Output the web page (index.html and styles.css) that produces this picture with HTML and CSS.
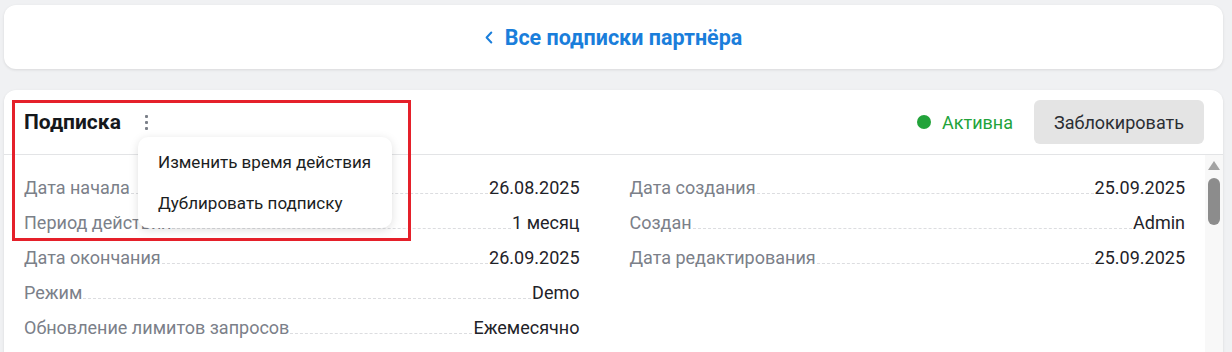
FILE: index.html
```html
<!DOCTYPE html>
<html lang="ru">
<head>
<meta charset="utf-8">
<title>Подписка</title>
<link rel="stylesheet" href="styles.css">
</head>
<body>
<div class="page">
  <div class="card nav-card">
    <a class="back-link" href="#">
      <svg class="chev" width="8" height="13" viewBox="0 0 8 13"><path d="M6.3 1.5 L1.6 6.5 L6.3 11.5" fill="none" stroke="currentColor" stroke-width="2" stroke-linecap="round" stroke-linejoin="round"/></svg>
      <span>Все подписки партнёра</span>
    </a>
  </div>

  <div class="card sub-card">
    <div class="sub-header">
      <div class="title-group">
        <h2 class="title">Подписка</h2>
        <button class="kebab" aria-label="Действия"><i></i><i></i><i></i></button>
      </div>
      <div class="actions">
        <span class="status"><span class="dot"></span>Активна</span>
        <button class="btn">Заблокировать</button>
      </div>
      <div class="menu">
        <div class="menu-item">Изменить время действия</div>
        <div class="menu-item">Дублировать подписку</div>
      </div>
    </div>
    <div class="sub-body">
      <div class="details">
        <div class="col">
          <div class="row"><span class="label">Дата начала</span><span class="leader"></span><span class="value">26.08.2025</span></div>
          <div class="row"><span class="label">Период действия</span><span class="leader"></span><span class="value">1 месяц</span></div>
          <div class="row"><span class="label">Дата окончания</span><span class="leader"></span><span class="value">26.09.2025</span></div>
          <div class="row"><span class="label">Режим</span><span class="leader"></span><span class="value">Demo</span></div>
          <div class="row"><span class="label">Обновление лимитов запросов</span><span class="leader"></span><span class="value">Ежемесячно</span></div>
        </div>
        <div class="col">
          <div class="row"><span class="label">Дата создания</span><span class="leader"></span><span class="value">25.09.2025</span></div>
          <div class="row"><span class="label">Создан</span><span class="leader"></span><span class="value">Admin</span></div>
          <div class="row"><span class="label">Дата редактирования</span><span class="leader"></span><span class="value">25.09.2025</span></div>
        </div>
      </div>
      <div class="scrollbar"><span class="sb-arrow"></span><span class="sb-thumb"></span></div>
    </div>
  </div>

  <div class="highlight"></div>
</div>
</body>
</html>
```

FILE: styles.css
```css
* { box-sizing: border-box; }
html, body { margin: 0; height: 100%; }
body {
  background: #f0f1f3;
  font-family: Roboto, "Noto Sans", "Liberation Sans", sans-serif;
  color: #1f2329;
  overflow: hidden;
}
.page {
  position: relative;
  padding: 5px 9px 0 4px;
  display: flex;
  flex-direction: column;
  gap: 21px;
}
.card {
  background: #fff;
  border-radius: 12px;
  box-shadow: 0 1px 3px rgba(0,0,0,0.10);
}
.nav-card {
  height: 64px;
  display: flex;
  align-items: center;
  justify-content: center;
}
.back-link {
  display: flex;
  align-items: center;
  gap: 12px;
  color: #1a7edb;
  text-decoration: none;
  font-weight: 700;
  font-size: 21.5px;
}
.chev { display: block; margin-top: 1px; }

.sub-card {
  height: 300px;
  display: flex;
  flex-direction: column;
}
.sub-header {
  position: relative;
  height: 65px;
  flex: none;
  display: flex;
  align-items: center;
  justify-content: space-between;
  padding: 0 19px 0 20px;
  border-bottom: 1px solid #e3e4e6;
}
.title-group { display: flex; align-items: center; }
.title {
  margin: 0;
  font-size: 21px;
  font-weight: 700;
  color: #15181c;
}
.kebab {
  margin-left: 14px;
  width: 24px;
  height: 24px;
  padding: 0;
  border: 0;
  background: none;
  display: flex;
  flex-direction: column;
  align-items: center;
  justify-content: center;
  gap: 3px;
}
.kebab i {
  display: block;
  width: 3px;
  height: 3px;
  border-radius: 1px;
  background: #7b8089;
}
.actions { display: flex; align-items: center; gap: 21px; }
.status {
  display: flex;
  align-items: center;
  gap: 11px;
  color: #22a33a;
  font-size: 18px;
}
.dot {
  width: 14px;
  height: 14px;
  border-radius: 50%;
  background: #22a33a;
}
.btn {
  height: 44px;
  padding: 0 20px;
  border: 0;
  border-radius: 6px;
  background: #e4e4e4;
  color: #2b2e33;
  font-family: inherit;
  font-size: 18px;
}
.menu {
  position: absolute;
  left: 134px;
  top: 47px;
  width: 254px;
  padding: 8px 0;
  display: flex;
  flex-direction: column;
  gap: 7px;
  background: #fff;
  border-radius: 10px;
  box-shadow: 0 2px 10px rgba(0,0,0,0.13);
  z-index: 5;
}
.menu-item {
  line-height: 34px;
  padding: 0 20px;
  font-size: 17px;
  color: #1b1e22;
}

.sub-body {
  flex: 1;
  display: flex;
  min-height: 0;
}
.details {
  flex: 1;
  display: grid;
  grid-template-columns: 1fr 1fr;
  column-gap: 50px;
  padding: 15px 20px 0;
  align-content: start;
}
.row {
  display: flex;
  align-items: baseline;
  height: 35px;
  line-height: 35px;
  font-size: 18px;
}
.label { color: #7b8089; white-space: nowrap; }
.leader {
  flex: 1;
  border-bottom: 1px dashed #dcdde0;
  margin: 0 1px;
}
.value { color: #1f2329; white-space: nowrap; }
.scrollbar {
  width: 18px;
  flex: none;
  background: #f8f8f8;
  border-bottom-right-radius: 12px;
  display: flex;
  flex-direction: column;
  align-items: center;
  padding-top: 6px;
}
.sb-arrow {
  width: 0;
  height: 0;
  border-left: 6px solid transparent;
  border-right: 6px solid transparent;
  border-bottom: 9px solid #a3a3a3;
}
.sb-thumb {
  margin-top: 8px;
  width: 12px;
  height: 47px;
  border-radius: 6px;
  background: #8c8c8c;
}
.highlight {
  position: absolute;
  left: 12px;
  top: 100px;
  width: 399px;
  height: 141px;
  border: 3px solid #e5202a;
  pointer-events: none;
  z-index: 10;
}
```
